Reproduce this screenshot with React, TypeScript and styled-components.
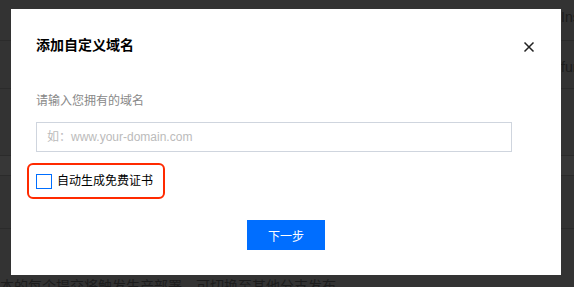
import React, { useState } from "react";
import styled, { createGlobalStyle } from "styled-components";

const GlobalStyle = createGlobalStyle`
  * { box-sizing: border-box; }
  html, body {
    margin: 0;
    padding: 0;
    background: #333333;
    font-family: "Liberation Sans", "Noto Sans CJK SC", sans-serif;
    overflow: hidden;
  }
`;

const Page = styled.div`
  width: 574px;
  height: 287px;
  display: flex;
  flex-direction: column;
  color: #1c1c1c;
  font-size: 14px;
`;

const Row = styled.div<{ h: number; pad?: number; tint?: boolean }>`
  height: ${(p) => p.h}px;
  padding-top: ${(p) => p.pad ?? 0}px;
  flex-shrink: 0;
  display: grid;
  grid-template-columns: 561px 1fr;
  align-items: start;
  line-height: 16px;
  border-bottom: 1px solid #2b2b2b;
  background: ${(p) => (p.tint ? "#373737" : "transparent")};
  white-space: nowrap;
  overflow: hidden;
`;

const Cell = styled.span`
  overflow: hidden;
`;

const Footnote = styled.div`
  margin-top: auto;
  height: 14px;
  font-size: 14px;
  line-height: 14px;
  white-space: nowrap;
  overflow: hidden;
  color: #1c1c1c;
  padding-top: 6px;
`;

const Overlay = styled.div`
  position: fixed;
  inset: 0;
`;

const Dialog = styled.div`
  position: absolute;
  left: 11px;
  top: 9px;
  width: 550px;
  height: 266px;
  background: #ffffff;
  padding: 26px 25px 25px;
  display: flex;
  flex-direction: column;
`;

const Header = styled.div`
  display: flex;
  align-items: center;
  justify-content: space-between;
  height: 20px;
`;

const Title = styled.h2`
  margin: 0;
  font-size: 14px;
  line-height: 20px;
  font-weight: 700;
  color: #000000;
`;

const CloseBtn = styled.button`
  border: none;
  background: transparent;
  padding: 0;
  width: 12px;
  height: 12px;
  margin-right: 1px;
  margin-top: 3px;
  display: flex;
  cursor: pointer;
`;

const Label = styled.div`
  margin-top: 37px;
  font-size: 12px;
  line-height: 18px;
  color: #888888;
`;

const Input = styled.input`
  margin-top: 12px;
  width: 476px;
  height: 30px;
  border: 1px solid #cfd5de;
  padding: 0 10px;
  font-size: 12px;
  font-family: inherit;
  color: #000;
  outline: none;
  &::placeholder {
    color: #bbbbbb;
  }
`;

const Highlight = styled.label`
  margin-top: 11px;
  margin-left: -9px;
  align-self: flex-start;
  display: flex;
  align-items: center;
  gap: 5px;
  border: 2px solid #ff2a00;
  border-radius: 6px;
  padding: 8px 10px 8px 7px;
  height: 36px;
  cursor: pointer;
`;

const Box = styled.span<{ checked: boolean }>`
  width: 16px;
  height: 15px;
  border: 1px solid #006eff;
  background: ${(p) => (p.checked ? "#006eff" : "#fff")};
  display: flex;
  align-items: center;
  justify-content: center;
`;

const CheckText = styled.span`
  font-size: 12px;
  line-height: 16px;
  color: #000000;
`;

const Footer = styled.div`
  margin-top: 21px;
  display: flex;
  justify-content: center;
`;

const PrimaryBtn = styled.button`
  width: 78px;
  height: 30px;
  border: none;
  background: #006eff;
  color: #ffffff;
  font-size: 12px;
  font-family: inherit;
  cursor: pointer;
`;

export default function App() {
  const [checked, setChecked] = useState(false);

  return (
    <>
      <GlobalStyle />
      <Page>
        <Row h={41} pad={9}>
          <Cell />
          <Cell>Install Command</Cell>
        </Row>
        <Row h={48} pad={18}>
          <Cell />
          <Cell>functions</Cell>
        </Row>
        <Row h={67}>
          <Cell />
          <Cell />
        </Row>
        <Row h={20} tint>
          <Cell />
          <Cell />
        </Row>
        <Row h={53}>
          <Cell />
          <Cell />
        </Row>
        <Footnote>本的每个提交将触发生产部署，可切换至其他分支发布</Footnote>
      </Page>
      <Overlay>
        <Dialog role="dialog">
          <Header>
            <Title>添加自定义域名</Title>
            <CloseBtn aria-label="关闭">
              <svg width="12" height="12" viewBox="0 0 12 12">
                <path
                  d="M1.5 1.5 L10.5 10.5 M10.5 1.5 L1.5 10.5"
                  stroke="#222"
                  strokeWidth="1.5"
                  fill="none"
                />
              </svg>
            </CloseBtn>
          </Header>
          <Label>请输入您拥有的域名</Label>
          <Input placeholder="如：www.your-domain.com" />
          <Highlight onClick={() => setChecked(!checked)}>
            <Box checked={checked} />
            <CheckText>自动生成免费证书</CheckText>
          </Highlight>
          <Footer>
            <PrimaryBtn>下一步</PrimaryBtn>
          </Footer>
        </Dialog>
      </Overlay>
    </>
  );
}
